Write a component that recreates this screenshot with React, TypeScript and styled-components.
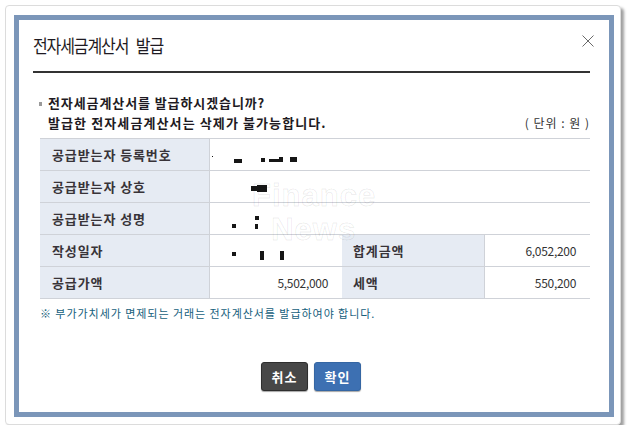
import React from "react";
import styled, { createGlobalStyle } from "styled-components";

const Global = createGlobalStyle`
  html, body { margin: 0; padding: 0; background: #ffffff; }
  body { font-family: "Noto Sans CJK KR", "Noto Sans", sans-serif; color: #222; }
  * { box-sizing: border-box; }
`;

const Frame = styled.div`
  margin: 5px 0 0 5px;
  width: 616px;
  height: 420px;
  background: #fff;
  border: 1px solid #dcdcdc;
  border-radius: 4px;
  box-shadow: 3px 3px 3px rgba(0, 0, 0, 0.38);
  padding: 9px 0 0 8px;
`;

const Dialog = styled.div`
  width: 600px;
  height: 402px;
  border: 5px solid #7b96b9;
  background: #fff;
  display: flex;
  flex-direction: column;
`;

const Header = styled.div`
  margin: 0 19px 0 14px;
  height: 53px;
  border-bottom: 2px solid #333;
  display: flex;
  align-items: center;
  justify-content: space-between;
  padding-bottom: 2px;
`;

const Title = styled.h1`
  margin: 0;
  font-size: 16px;
  font-weight: 400;
  letter-spacing: -1.1px;
  word-spacing: 5px;
  color: #1e1a22;
  transform: scaleY(1.12);
`;

const Close = styled.button`
  border: 0;
  background: none;
  padding: 0;
  width: 13px;
  height: 13px;
  margin: 0 -4px 8px 0;
  display: flex;
  align-items: center;
  justify-content: center;
  cursor: pointer;
`;

const Body = styled.div`
  padding: 20px 19px 0 21px;
  display: flex;
  flex-direction: column;
`;

const Question = styled.div`
  padding-left: 8px;
  font-size: 13px;
  font-weight: 700;
  line-height: 20px;
  color: #1e1a22;
  letter-spacing: 0.9px;
  position: relative;
  &::before {
    content: "";
    position: absolute;
    left: -1px;
    top: 9px;
    width: 3px;
    height: 4px;
    background: #9a9a9a;
  }
`;

const LastLine = styled.div`
  display: flex;
  justify-content: space-between;
  align-items: center;
  padding-left: 8px;
  line-height: 20px;
`;

const Warning = styled.span`
  font-size: 13px;
  font-weight: 700;
  color: #1e1a22;
  letter-spacing: 1.1px;
`;

const Unit = styled.span`
  font-size: 12px;
  color: #333;
  letter-spacing: 1px;
`;

const Table = styled.div`
  margin-top: 5px;
  display: grid;
  grid-template-columns: 170px 132px 143px 105px;
  border-top: 1px solid #cfd2d8;
  position: relative;
`;

const Label = styled.div<{ $pad?: number }>`
  height: 32px;
  background: #e6ebf3;
  border-bottom: 1px solid #cfd2d8;
  border-right: 1px solid #cfd2d8;
  display: flex;
  align-items: center;
  padding-left: ${(p) => p.$pad ?? 12}px;
  font-size: 13px;
  font-weight: 700;
  color: #383338;
  letter-spacing: 0.9px;
`;

const Value = styled.div<{ $span?: number; $right?: boolean }>`
  height: 32px;
  grid-column: span ${(p) => p.$span ?? 1};
  border-bottom: 1px solid #cfd2d8;
  display: flex;
  align-items: center;
  justify-content: ${(p) => (p.$right ? "flex-end" : "flex-start")};
  padding-right: 14px;
  font-size: 12px;
  color: #333;
  position: relative;
  letter-spacing: -0.3px;
`;

const Mask = styled.i`
  position: absolute;
  background: #161616;
  display: block;
`;

const Watermark = styled.div`
  position: absolute;
  left: 212px;
  top: 40px;
  font-family: "Liberation Sans", Arial, sans-serif;
  font-size: 31px;
  font-weight: 700;
  line-height: 34px;
  color: rgba(255, 255, 255, 0);
  -webkit-text-stroke: 1px rgba(0, 0, 0, 0.08);
  pointer-events: none;
  letter-spacing: 1px;
`;

const Note = styled.p`
  margin: 6px 0 0 0;
  font-size: 11px;
  line-height: 16px;
  color: #15607c;
  letter-spacing: 0.95px;
`;

const Buttons = styled.div`
  margin-top: 41px;
  display: flex;
  justify-content: center;
  gap: 6px;
  padding-right: 8px;
`;

const Btn = styled.button<{ $primary?: boolean }>`
  width: 47px;
  height: 29px;
  border-radius: 3px;
  border: 1px solid ${(p) => (p.$primary ? "#3566a3" : "#2e2e2e")};
  background: ${(p) => (p.$primary ? "#3d70b2" : "#474747")};
  box-shadow: 0 1px 1px rgba(0, 0, 0, 0.35);
  color: #fff;
  font-family: "Noto Sans CJK KR", sans-serif;
  font-size: 13px;
  font-weight: 700;
  letter-spacing: 1px;
  padding: 0;
  cursor: pointer;
`;

type Blob = [number, number, number, number];

const masks: Blob[][] = [
  [[2, 17, 1, 1], [24, 20, 8, 4], [51, 19, 4, 4], [59, 20, 10, 3], [69, 18, 4, 5], [80, 18, 7, 5]],
  [[41, 15, 6, 5], [47, 14, 10, 7]],
  [[22, 21, 4, 4], [45, 13, 4, 4], [45, 21, 3, 5]],
  [[22, 17, 4, 4], [50, 16, 4, 9], [70, 16, 4, 9]],
];

const Masks = ({ list }: { list: Blob[] }) => (
  <>
    {list.map(([l, t, w, h], i) => (
      <Mask key={i} style={{ left: l, top: t, width: w, height: h }} />
    ))}
  </>
);

export default function App() {
  return (
    <>
      <Global />
      <Frame>
        <Dialog>
          <Header>
            <Title>전자세금계산서 발급</Title>
            <Close aria-label="닫기">
              <svg width="12" height="12" viewBox="0 0 12 12">
                <path d="M0.5 0.5 L11.5 11.5 M11.5 0.5 L0.5 11.5" stroke="#6a6a6a" strokeWidth="1" />
              </svg>
            </Close>
          </Header>
          <Body>
            <Question>전자세금계산서를 발급하시겠습니까?</Question>
            <LastLine>
              <Warning>발급한 전자세금계산서는 삭제가 불가능합니다.</Warning>
              <Unit>( 단위 : 원 )</Unit>
            </LastLine>
            <Table>
              <Label>공급받는자 등록번호</Label>
              <Value $span={3}>
                <Masks list={masks[0]} />
              </Value>
              <Label>공급받는자 상호</Label>
              <Value $span={3}>
                <Masks list={masks[1]} />
              </Value>
              <Label>공급받는자 성명</Label>
              <Value $span={3}>
                <Masks list={masks[2]} />
              </Value>
              <Label>작성일자</Label>
              <Value>
                <Masks list={masks[3]} />
              </Value>
              <Label $pad={11}>합계금액</Label>
              <Value $right>6,052,200</Value>
              <Label>공급가액</Label>
              <Value $right>5,502,000</Value>
              <Label $pad={11}>세액</Label>
              <Value $right>550,200</Value>
              <Watermark>
                Finance
                <br />
                &nbsp;&nbsp;News
              </Watermark>
            </Table>
            <Note>※ 부가가치세가 면제되는 거래는 전자계산서를 발급하여야 합니다.</Note>
            <Buttons>
              <Btn>취소</Btn>
              <Btn $primary>확인</Btn>
            </Buttons>
          </Body>
        </Dialog>
      </Frame>
    </>
  );
}
